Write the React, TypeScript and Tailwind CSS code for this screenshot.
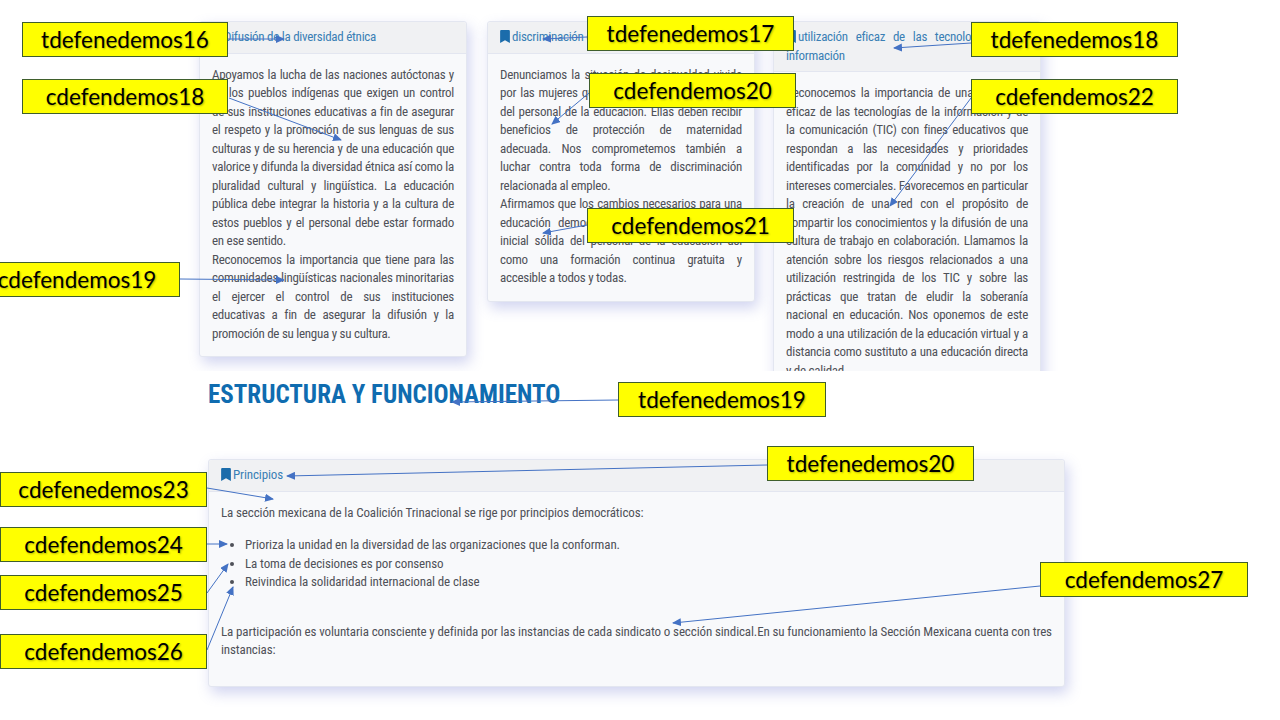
import * as React from "react";
import { FaBookmark } from "react-icons/fa";

const labels = [
  { text: "tdefenedemos16", pos: "left-[22px] top-[22px] w-[206px]" },
  { text: "cdefendemos18", pos: "left-[22px] top-[79px] w-[206px]" },
  { text: "cdefendemos19", pos: "left-[-26px] top-[262px] w-[206px]" },
  { text: "tdefenedemos17", pos: "left-[587px] top-[16px] w-[207px]" },
  { text: "cdefendemos20", pos: "left-[589px] top-[73px] w-[207px]" },
  { text: "cdefendemos21", pos: "left-[587px] top-[208px] w-[207px]" },
  { text: "tdefenedemos18", pos: "left-[971px] top-[22px] w-[207px]" },
  { text: "cdefendemos22", pos: "left-[971px] top-[79px] w-[207px]" },
  { text: "tdefenedemos19", pos: "left-[618px] top-[382px] w-[208px]" },
  { text: "tdefenedemos20", pos: "left-[767px] top-[446px] w-[207px]" },
  { text: "cdefenedemos23", pos: "left-0 top-[472px] w-[207px]" },
  { text: "cdefendemos24", pos: "left-0 top-[527px] w-[207px]" },
  { text: "cdefendemos25", pos: "left-0 top-[575px] w-[207px]" },
  { text: "cdefendemos26", pos: "left-0 top-[634px] w-[207px]" },
  { text: "cdefendemos27", pos: "left-[1040px] top-[562px] w-[208px]" },
];

// x1, y1 -> x2, y2 (arrow head at the end)
const arrows = [
  [228, 39, 284, 39],
  [229, 98, 341, 140],
  [180, 279, 284, 280],
  [587, 37, 543, 39],
  [589, 93, 552, 124],
  [587, 225, 543, 233],
  [971, 43, 894, 48],
  [971, 98, 890, 206],
  [618, 400, 452, 402],
  [767, 465, 287, 476],
  [207, 488, 273, 499],
  [207, 544, 227, 544],
  [207, 593, 228, 564],
  [207, 650, 233, 587],
  [1040, 586, 673, 623],
];

function Arrows() {
  return (
    <svg className="absolute left-0 top-0 z-10 pointer-events-none" width={1280} height={720}>
      <defs>
        <marker id="head" markerWidth="9" markerHeight="8" refX="8" refY="4" orient="auto" markerUnits="userSpaceOnUse">
          <path d="M0 0L9 4L0 8Z" fill="#4472c4" />
        </marker>
      </defs>
      {arrows.map(([x1, y1, x2, y2], i) => (
        <line key={i} x1={x1} y1={y1} x2={x2} y2={y2} stroke="#4472c4" strokeWidth={1} markerEnd="url(#head)" />
      ))}
    </svg>
  );
}

function Card({ title, className, children }: { title: string; className: string; children: React.ReactNode }) {
  return (
    <div className={`shrink-0 rounded-[3px] border border-[#e3e6f0] bg-[#f8f9fb] shadow-[3px_6px_14px_rgba(90,100,200,0.28)] ${className}`}>
      <div className="rounded-t-[3px] border-b border-[#e3e6f0] bg-[#f0f1f3] px-[12px] py-[6px] text-justify text-[#3a7fb5] leading-[18.5px]">
        <FaBookmark className="inline-block mr-[2px] mb-[2px] h-[13px] w-[10px] text-[#1b6cab]" />
        {title}
      </div>
      {children}
    </div>
  );
}

export default function App() {
  return (
    <div className="relative h-[720px] w-[1280px] overflow-hidden bg-white text-[13px] tracking-[-0.12px] [font-stretch:87.5%] text-[#4f5158] font-['Roboto',sans-serif]">
      {/* top cards, cut off at the bottom like the capture */}
      <div className="flex h-[371px] items-start overflow-hidden pl-[199px] pt-[21px] tracking-[-0.27px]">
        <Card title="Difusión de la diversidad étnica" className="w-[268px]">
          <div className="px-[12px] pt-[12px] pb-[13px] text-justify leading-[18.5px]">
            <p>Apoyamos la lucha de las naciones autóctonas y de los pueblos indígenas que exigen un control de sus instituciones educativas a fin de asegurar el respeto y la promoción de sus lenguas de sus culturas y de su herencia y de una educación que valorice y difunda la diversidad étnica así como la pluralidad cultural y lingüística. La educación pública debe integrar la historia y a la cultura de estos pueblos y el personal debe estar formado en ese sentido.</p>
            <p>Reconocemos la importancia que tiene para las comunidades lingüísticas nacionales minoritarias el ejercer el control de sus instituciones educativas a fin de asegurar la difusión y la promoción de su lengua y su cultura.</p>
          </div>
        </Card>
        <Card title="discriminación de género" className="ml-5 w-[268px]">
          <div className="px-[12px] pt-[12px] pb-[13px] text-justify leading-[18.5px]">
            <p>Denunciamos la situación de desigualdad vivida por las mujeres que constituyen la gran mayoría del personal de la educación. Ellas deben recibir beneficios de protección de maternidad adecuada. Nos comprometemos también a luchar contra toda forma de discriminación relacionada al empleo.</p>
            <p>Afirmamos que los cambios necesarios para una educación democrática exigen una formación inicial sólida del personal de la educación así como una formación continua gratuita y accesible a todos y todas.</p>
          </div>
        </Card>
        <Card title="utilización eficaz de las tecnologías de la información" className="ml-[18px] w-[268px]">
          <div className="px-[12px] pt-[12px] pb-[13px] text-justify leading-[18.5px]">
            <p>Reconocemos la importancia de una utilización eficaz de las tecnologías de la información y de la comunicación (TIC) con fines educativos que respondan a las necesidades y prioridades identificadas por la comunidad y no por los intereses comerciales. Favorecemos en particular la creación de una red con el propósito de compartir los conocimientos y la difusión de una cultura de trabajo en colaboración. Llamamos la atención sobre los riesgos relacionados a una utilización restringida de los TIC y sobre las prácticas que tratan de eludir la soberanía nacional en educación. Nos oponemos de este modo a una utilización de la educación virtual y a distancia como sustituto a una educación directa y de calidad.</p>
          </div>
        </Card>
      </div>

      <h2 className="ml-[208px] mt-[9px] text-[25px] tracking-normal font-bold leading-[30px] text-[#0f6cb0]">
        ESTRUCTURA Y FUNCIONAMIENTO
      </h2>

      <div className="ml-[208px] mt-[49px]">
        <Card title="Principios" className="w-[857px]">
          <div className="h-[194px] px-[12px] pt-[12px] leading-[18.6px]">
            <p>La sección mexicana de la Coalición Trinacional se rige por principios democráticos:</p>
            <ul className="mt-[14px] list-disc pl-[24px]">
              <li>Prioriza la unidad en la diversidad de las organizaciones que la conforman.</li>
              <li>La toma de decisiones es por consenso</li>
              <li>Reivindica la solidaridad internacional de clase</li>
            </ul>
            <p className="mt-[31px]">La participación es voluntaria consciente y definida por las instancias de cada sindicato o sección sindical.En su funcionamiento la Sección Mexicana cuenta con tres instancias:</p>
          </div>
        </Card>
      </div>

      <Arrows />

      {labels.map((l) => (
        <div
          key={l.text}
          className={`absolute z-20 flex h-[35px] items-center justify-center border border-[#3f5f2c] bg-[#ffff00] text-[22.5px] tracking-normal [font-stretch:100%] text-black [text-shadow:1px_1px_2px_rgba(0,0,0,0.3)] font-['Lato',sans-serif] ${l.pos}`}
        >
          {l.text}
        </div>
      ))}
    </div>
  );
}
